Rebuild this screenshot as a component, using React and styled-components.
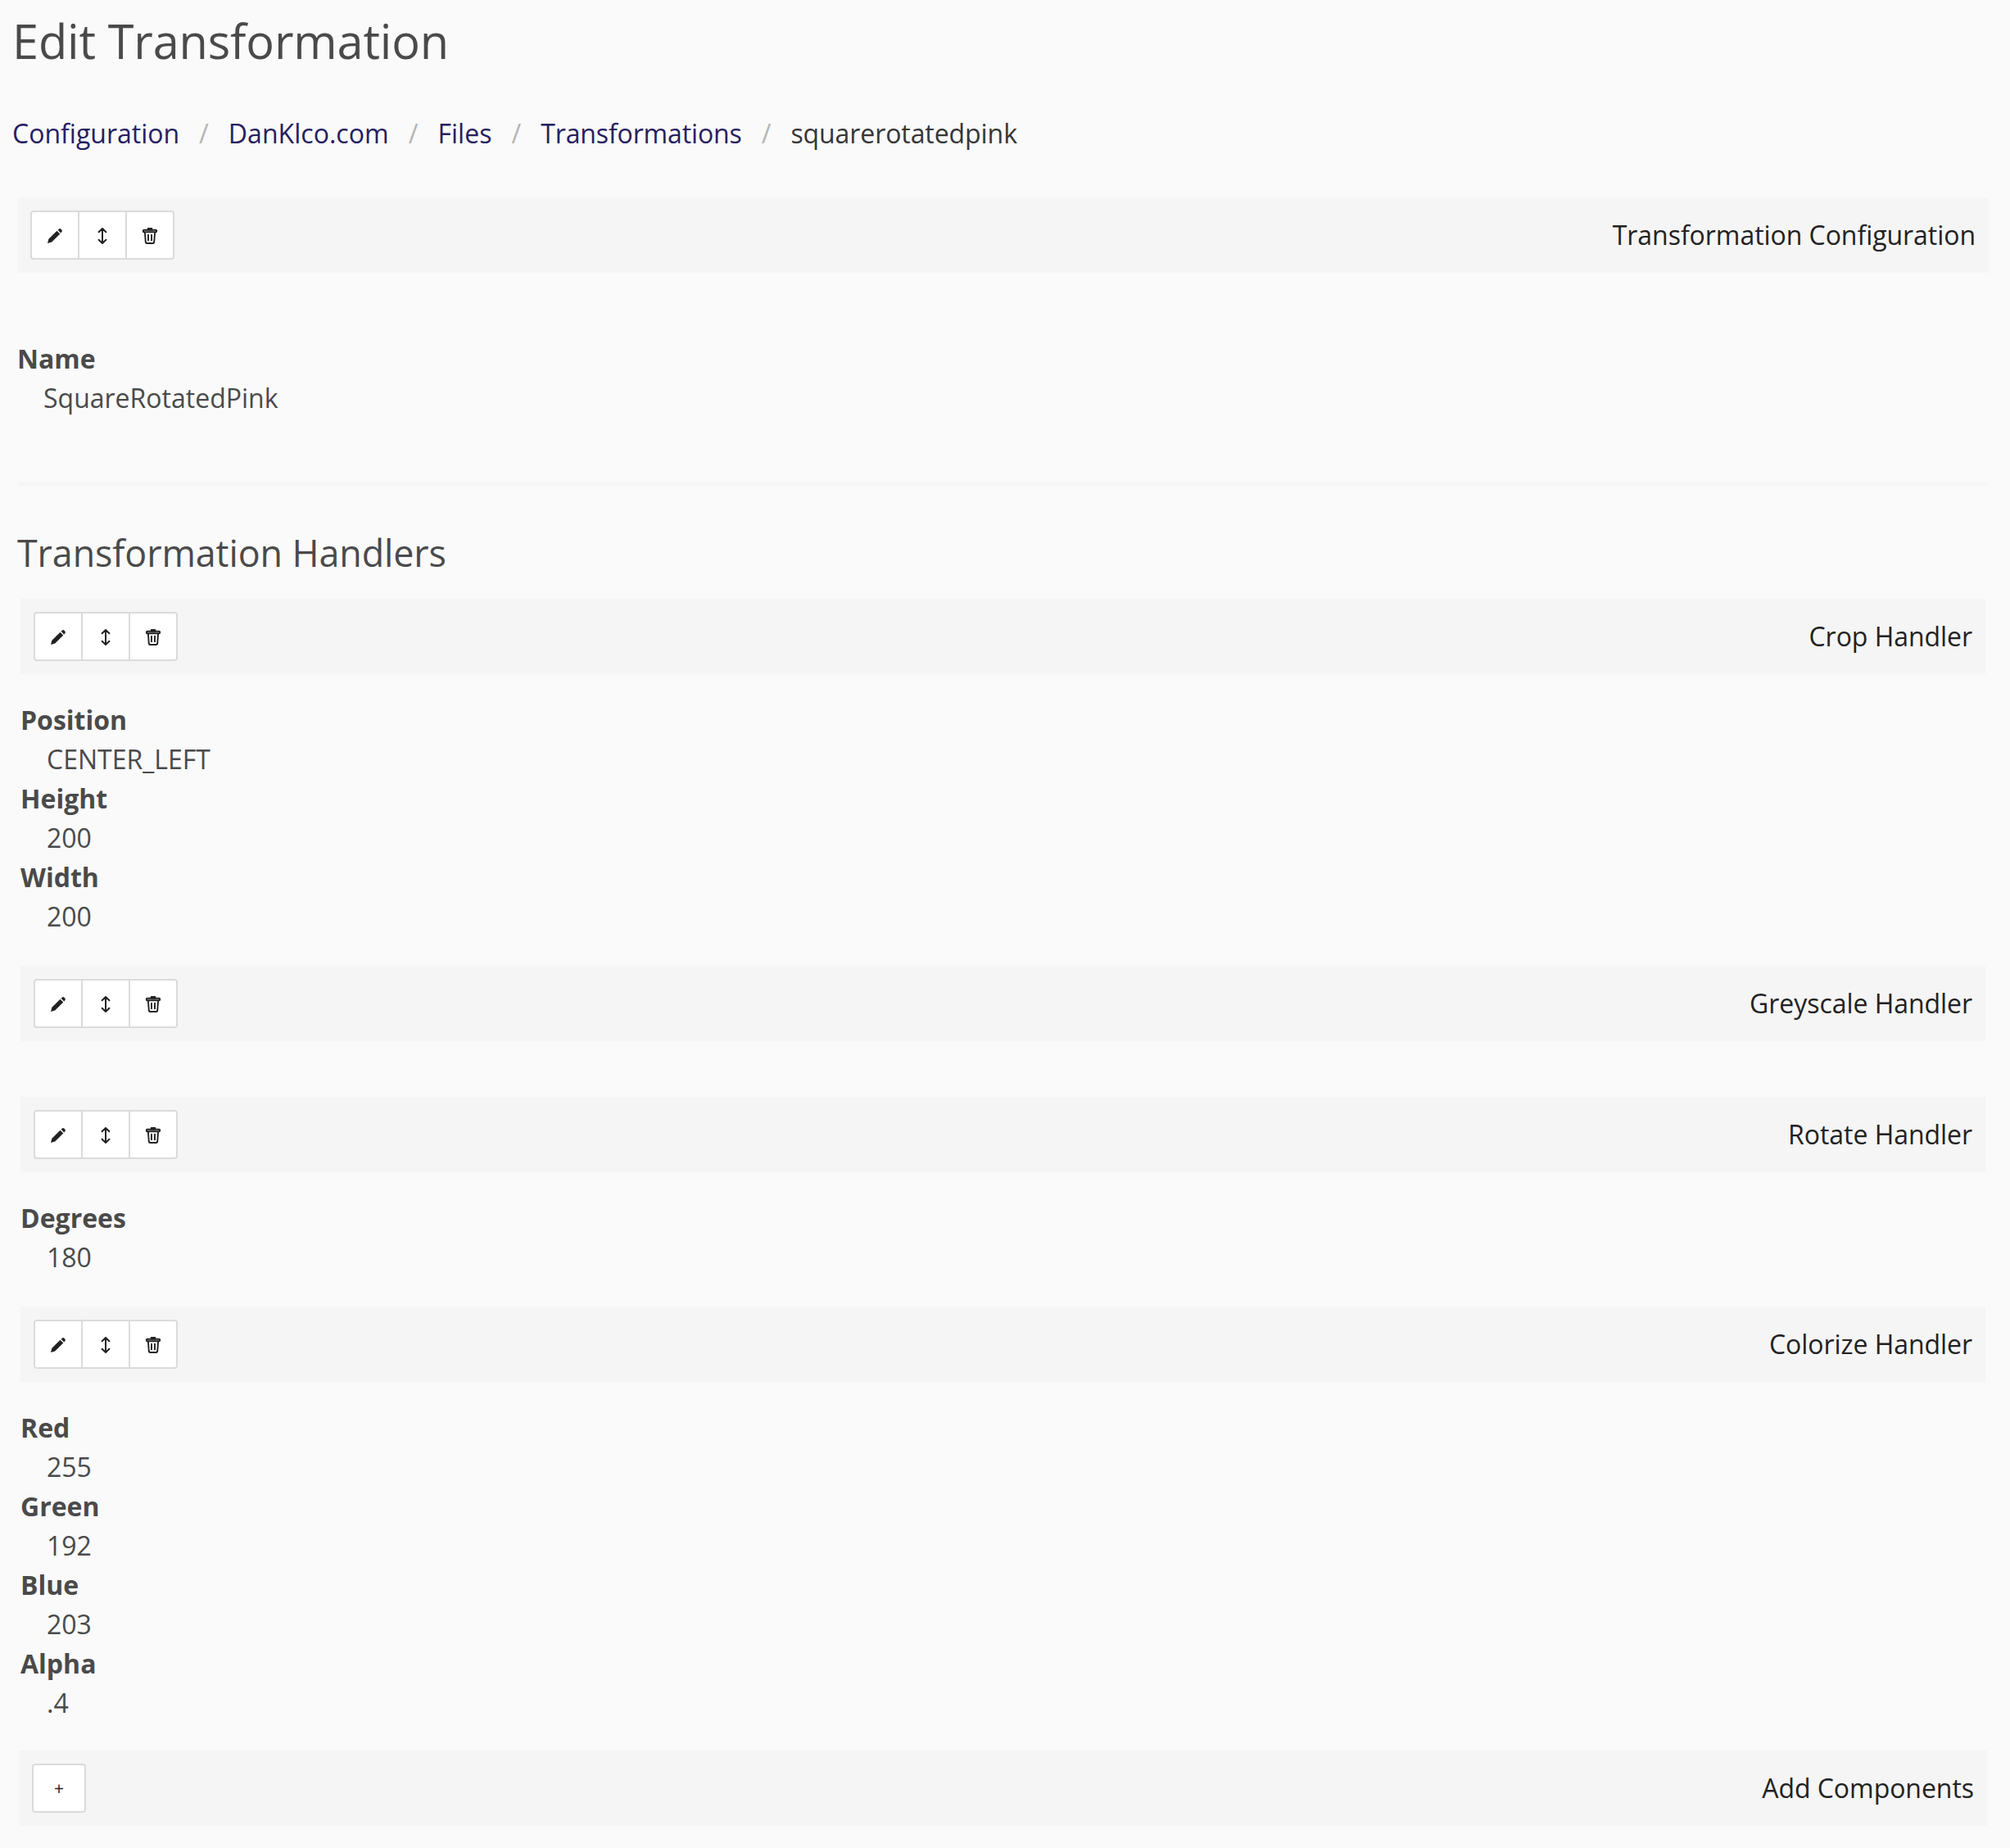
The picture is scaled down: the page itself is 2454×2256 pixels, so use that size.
import React from 'react';
import styled, { createGlobalStyle } from 'styled-components';

const GlobalStyle = createGlobalStyle`
  *, *::before, *::after { box-sizing: border-box; }
  body {
    margin: 0;
    background: #fafafa;
    color: #4a4a4a;
    font: 400 32px/48px "Open Sans", "Noto Sans", sans-serif;
  }
`;

const Page = styled.main`
  min-height: 2256px;
`;

const Title = styled.h1`
  margin: 0;
  padding: 17px 15px 2px;
  font-size: 57.6px;
  line-height: 65px;
  font-weight: 400;
  letter-spacing: -0.12px;
`;

const Crumbs = styled.ol`
  display: flex;
  list-style: none;
  margin: 0;
  padding: 55px 0 54px;
`;

const Crumb = styled.li`
  display: flex;
  white-space: nowrap;
  & + &::before {
    content: '/';
    color: #b5b5b5;
  }
`;

const CrumbLink = styled.a`
  padding: 0 24px;
  color: ${(p) => (p.$current ? '#363636' : '#26205f')};
  letter-spacing: ${(p) => p.$tracking || 0}px;
  text-decoration: none;
  ${Crumb}:first-child & { padding-left: 15px; }
`;

const Section = styled.section`
  margin: ${(p) => p.$margin};
`;

const Bar = styled.header`
  display: flex;
  align-items: center;
  justify-content: space-between;
  height: 92px;
  padding: 16px;
  background: #f5f5f5;
  color: #222;
`;

const BarTitle = styled.span`
  letter-spacing: -0.05px;
`;

const Buttons = styled.div`
  display: flex;
`;

const Button = styled.button`
  display: flex;
  align-items: center;
  justify-content: center;
  width: ${(p) => (p.$wide ? 66 : 60)}px;
  height: 60px;
  padding: 0;
  border: 2px solid #dbdbdb;
  background: #fff;
  color: #222;
  font: 400 21px/32px "Open Sans", "Noto Sans", sans-serif;
  &:first-child { border-radius: 4px 0 0 4px; }
  &:last-child { border-radius: 0 4px 4px 0; }
  &:only-child { border-radius: 4px; }
  & + & { margin-left: -2px; }
`;

const Glyph = styled.svg`
  display: block;
  width: 20px;
  height: 20px;
  margin-top: 2px;
`;

const Properties = styled.dl`
  margin: 0;
  padding-top: ${(p) => p.$top || 32}px;
`;

const Term = styled.dt`
  font-weight: 700;
`;

const Detail = styled.dd`
  margin: 0 0 0 32px;
`;

const Divider = styled.hr`
  height: 4px;
  margin: 79px 26px 0 21px;
  border: 0;
  background: #f5f5f5;
`;

const Subtitle = styled.h2`
  margin: 0;
  padding: 55px 21px 29px;
  font-size: 44.8px;
  line-height: 54px;
  font-weight: 400;
  letter-spacing: -0.08px;
`;

const Pencil = () => (
  <Glyph viewBox="0 0 20 20" fill="currentColor">
    <path d="M1 19 L2.4 13.8 L12.5 3.7 L16.3 7.5 L6.2 17.4 Z" />
    <path d="M13.6 2.7 L15 1.4 Q16.2 .6 17.5 1.8 L18.2 2.6 Q19.4 3.9 18.5 5.1 L17.2 6.4 Z" />
  </Glyph>
);

const Arrows = () => (
  <Glyph viewBox="0 0 20 20" fill="none" stroke="currentColor" strokeWidth="2" strokeLinecap="round">
    <path d="M10 1.2V18.8M5.6 5.2L10 1L14.4 5.2M5.6 14.8L10 19L14.4 14.8" />
  </Glyph>
);

const Trash = () => (
  <Glyph viewBox="0 0 20 20" fill="none" stroke="currentColor" strokeWidth="1.9" strokeLinejoin="round">
    <path fill="currentColor" d="M7.7 1H12.3V2.6H7.7Z" />
    <rect x="1.8" y="2.8" width="16.4" height="2.5" rx="1" />
    <path d="M3.9 5.5L4.8 17.5Q5 19 6.3 19H13.7Q15 19 15.2 17.5L16.1 5.5" />
    <path d="M8 8V16M12 8V16" />
  </Glyph>
);

function ComponentBar({ title }) {
  return (
    <Bar>
      <Buttons>
        <Button aria-label="Edit"><Pencil /></Button>
        <Button aria-label="Reorder"><Arrows /></Button>
        <Button aria-label="Delete"><Trash /></Button>
      </Buttons>
      <BarTitle>{title}</BarTitle>
    </Bar>
  );
}

function PropertyList({ items, top }) {
  return (
    <Properties $top={top}>
      {items.map(([name, value]) => (
        <React.Fragment key={name}>
          <Term>{name}</Term>
          <Detail>{value}</Detail>
        </React.Fragment>
      ))}
    </Properties>
  );
}

const crumbs = [
  { label: 'Configuration' },
  { label: 'DanKlco.com', tracking: 0.03 },
  { label: 'Files', tracking: 0.05 },
  { label: 'Transformations', tracking: -0.14 },
  { label: 'squarerotatedpink', tracking: -0.08 },
];

const handlers = [
  { title: 'Crop Handler', items: [['Position', 'CENTER_LEFT'], ['Height', '200'], ['Width', '200']] },
  { title: 'Greyscale Handler', items: [] },
  { title: 'Rotate Handler', items: [['Degrees', '180']] },
  { title: 'Colorize Handler', items: [['Red', '255'], ['Green', '192'], ['Blue', '203'], ['Alpha', '.4']] },
];

export default function App() {
  return (
    <Page>
      <GlobalStyle />
      <Title>Edit Transformation</Title>
      <nav>
        <Crumbs>
          {crumbs.map(({ label, tracking }, i) => (
            <Crumb key={label}>
              <CrumbLink $tracking={tracking} $current={i === crumbs.length - 1}>{label}</CrumbLink>
            </Crumb>
          ))}
        </Crumbs>
      </nav>
      <Section $margin="0 26px 0 21px">
        <ComponentBar title="Transformation Configuration" />
        <PropertyList top={81} items={[['Name', 'SquareRotatedPink']]} />
      </Section>
      <Divider />
      <Subtitle>Transformation Handlers</Subtitle>
      {handlers.map((h, i) => (
        <Section key={h.title} $margin={`0 30px ${i === handlers.length - 1 ? 34 : 36}px 25px`}>
          <ComponentBar title={h.title} />
          <PropertyList items={h.items} />
        </Section>
      ))}
      <Section $margin="0 28px 0 23px">
        <Bar>
          <Buttons>
            <Button $wide>+</Button>
          </Buttons>
          <BarTitle>Add Components</BarTitle>
        </Bar>
      </Section>
    </Page>
  );
}
